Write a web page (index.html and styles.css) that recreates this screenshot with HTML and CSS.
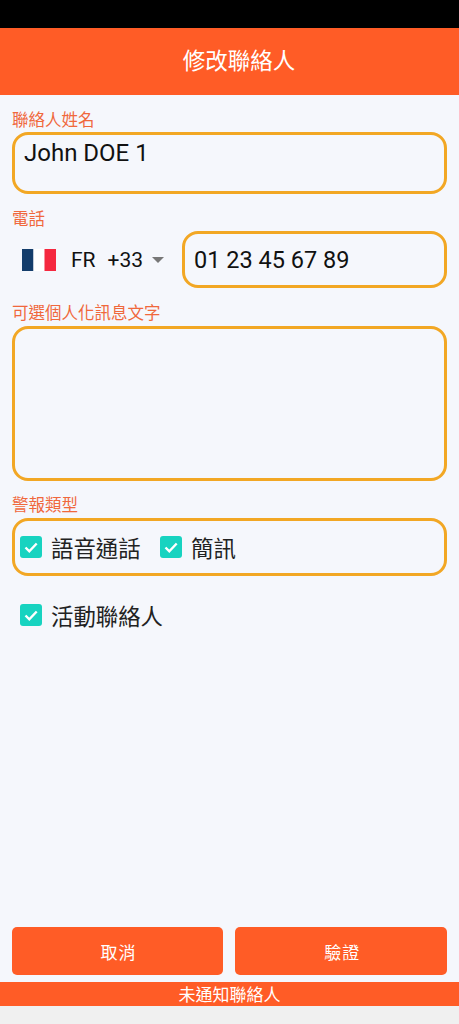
FILE: index.html
```html
<!DOCTYPE html>
<html lang="zh-Hant">
<head>
    <meta charset="UTF-8">
    <meta name="viewport" content="width=device-width, initial-scale=1.0">
    <title>修改聯絡人</title>
    <link rel="stylesheet" href="styles.css">
</head>
<body>
    <div class="status-bar"></div>
    <header class="app-header">修改聯絡人</header>

    <main class="form">
        <label class="field-label label-name">聯絡人姓名</label>
        <div class="box name-box">John DOE 1</div>

        <label class="field-label label-phone">電話</label>
        <div class="phone-row">
            <div class="country">
                <svg class="flag" viewBox="0 0 34 22" width="34" height="22">
                    <rect width="11.5" height="22" fill="#143d6b"/>
                    <rect x="11.5" width="11" height="22" fill="#fff"/>
                    <rect x="22.5" width="11.5" height="22" fill="#f5283f"/>
                </svg>
                <span class="country-code">FR</span>
                <span class="dial-code">+33</span>
                <span class="caret"></span>
            </div>
            <div class="box phone-box">01 23 45 67 89</div>
        </div>

        <label class="field-label label-message">可選個人化訊息文字</label>
        <div class="box message-box"></div>

        <label class="field-label label-alert">警報類型</label>
        <div class="box alert-box">
            <div class="check-item">
                <svg class="check" viewBox="0 0 22 22" width="22" height="22"><rect width="22" height="22" rx="3" fill="#17d3c0"/><path d="M5.5 11.5l3.8 3.8 7.4-7.8" fill="none" stroke="#fff" stroke-width="2.4"/></svg>
                <span>語音通話</span>
            </div>
            <div class="check-item">
                <svg class="check" viewBox="0 0 22 22" width="22" height="22"><rect width="22" height="22" rx="3" fill="#17d3c0"/><path d="M5.5 11.5l3.8 3.8 7.4-7.8" fill="none" stroke="#fff" stroke-width="2.4"/></svg>
                <span>簡訊</span>
            </div>
        </div>

        <div class="check-item active-item">
            <svg class="check" viewBox="0 0 22 22" width="22" height="22"><rect width="22" height="22" rx="3" fill="#17d3c0"/><path d="M5.5 11.5l3.8 3.8 7.4-7.8" fill="none" stroke="#fff" stroke-width="2.4"/></svg>
            <span>活動聯絡人</span>
        </div>

        <div class="actions">
            <button class="btn">取消</button>
            <button class="btn">驗證</button>
        </div>
    </main>

    <div class="notice">未通知聯絡人</div>
    <div class="bottom-strip"></div>
</body>
</html>
```

FILE: styles.css
```css
* {
    margin: 0;
    padding: 0;
    box-sizing: border-box;
}
html, body {
    height: 1024px;
    overflow: hidden;
}
body {
    font-family: Roboto, "Noto Sans CJK TC", sans-serif;
    background-color: #f5f7fc;
    color: #111;
    display: flex;
    flex-direction: column;
}
.status-bar {
    height: 28px;
    background: #000;
}
.app-header {
    height: 67px;
    padding-left: 19px;
    background: #ff5c26;
    color: #fff;
    font-size: 22.5px;
    line-height: 67px;
    text-align: center;
}
.form {
    flex: 1;
    display: flex;
    flex-direction: column;
    padding: 0 12px;
}
.field-label {
    display: block;
    color: #f0683c;
    font-size: 16.5px;
    line-height: 20px;
}
.label-name {
    margin-top: 16px;
    margin-bottom: 1px;
}
.label-phone {
    margin-top: 16px;
    margin-bottom: 1px;
}
.label-message {
    margin-top: 16px;
    margin-bottom: 2px;
}
.label-alert {
    margin-top: 15.5px;
    margin-bottom: 2px;
}
.box {
    border: 3px solid #f2a724;
    border-radius: 16px;
}
.name-box {
    height: 62px;
    padding: 2px 9px;
    font-size: 24px;
    line-height: 32px;
}
.phone-row {
    display: flex;
    align-items: center;
}
.country {
    width: 170px;
    display: flex;
    align-items: center;
    padding-left: 10px;
    font-size: 21px;
}
.country-code {
    margin-left: 15px;
}
.dial-code {
    margin-left: 12px;
}
.caret {
    margin-left: 9px;
    border-left: 6px solid transparent;
    border-right: 6px solid transparent;
    border-top: 6px solid #777;
}
.phone-box {
    flex: 1;
    height: 57px;
    padding-left: 9px;
    font-size: 23.5px;
    line-height: 52px;
}
.message-box {
    height: 154.5px;
}
.alert-box {
    height: 57.5px;
    display: flex;
    align-items: center;
    gap: 19.5px;
    padding-left: 5px;
}
.check-item {
    display: flex;
    align-items: center;
    gap: 9px;
    font-size: 22.4px;
    color: #222;
}
.active-item {
    margin-top: 23.5px;
    margin-left: 8px;
}
.actions {
    margin-top: auto;
    margin-bottom: 7px;
    margin-left: -0.3px;
    display: flex;
    gap: 12px;
}
.btn {
    flex: 1;
    height: 48px;
    border: none;
    border-radius: 5px;
    padding-left: 2px;
    background: #ff5c26;
    color: #fff;
    font-family: inherit;
    font-size: 17px;
    letter-spacing: 1px;
}
.notice {
    height: 24px;
    background: #ff5c26;
    color: #fff;
    font-size: 17px;
    line-height: 26px;
    text-align: center;
    overflow: hidden;
}
.bottom-strip {
    height: 18px;
    background: #f0f0f0;
}
```
